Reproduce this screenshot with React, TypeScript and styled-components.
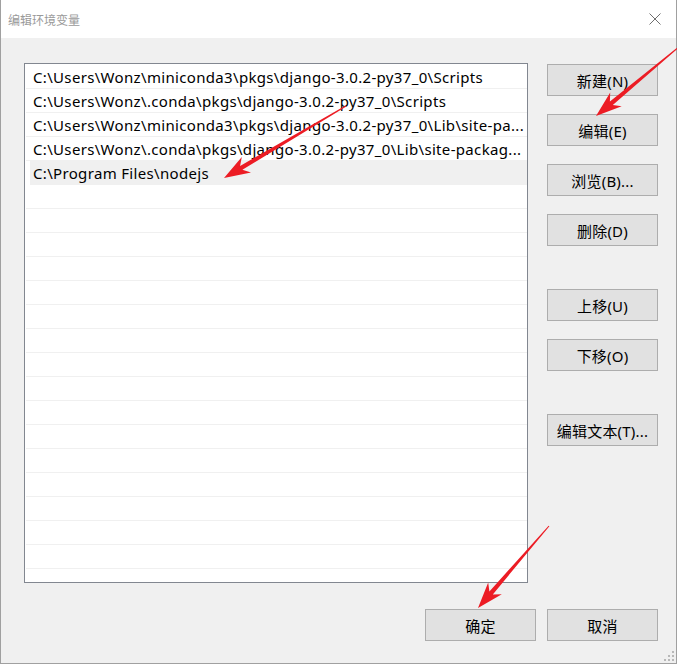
import React from "react";
import styled, { createGlobalStyle } from "styled-components";

const GlobalStyle = createGlobalStyle`
  html, body { margin: 0; padding: 0; background: #f0f0f0; }
  body { font-family: "Noto Sans CJK SC", "Noto Sans", sans-serif; }
  * { box-sizing: border-box; }
`;

const Page = styled.div`
  position: relative;
  width: 677px;
  height: 664px;
  overflow: hidden;
`;

const Window = styled.div`
  width: 677px;
  height: 664px;
  border: 1px solid #a0a0a0;
  border-top: none;
  background: #f0f0f0;
  display: flex;
  flex-direction: column;
`;

const TitleBar = styled.div`
  height: 38px;
  flex: none;
  background: #ffffff;
  display: flex;
  align-items: center;
  justify-content: space-between;
  padding: 0 15px 0 7px;
`;

const Title = styled.span`
  font-size: 12px;
  line-height: 1;
  color: #9a9a9a;
  padding-top: 1px;
`;

const CloseIcon = styled.svg`
  width: 12px;
  height: 12px;
  display: block;
`;

const Body = styled.div`
  flex: 1;
  display: grid;
  grid-template-columns: 504px 111px;
  grid-template-rows: 520px 32px;
  column-gap: 19px;
  row-gap: 26px;
  padding: 25px 0 0 23px;
  position: relative;
`;

const ListBox = styled.div`
  border: 1px solid #828790;
  background: #ffffff;
  overflow: hidden;
  padding: 1px 0 0 1px;
`;

const Row = styled.div<{ $selected?: boolean }>`
  height: 24px;
  border-bottom: 1px solid #f0f0f0;
  display: flex;
  align-items: center;
  margin-left: ${(p) => (p.$selected ? "4px" : "0")};
  padding-left: ${(p) => (p.$selected ? "3px" : "7px")};
  padding-top: 1px;
  background: ${(p) => (p.$selected ? "#f0f0f0" : "#ffffff")};
  font-family: "Noto Sans", "Noto Sans CJK SC", sans-serif;
  font-size: 15px;
  letter-spacing: 0.33px;
  color: #000;
  white-space: nowrap;
  overflow: hidden;
`;

const SideButtons = styled.div`
  display: flex;
  flex-direction: column;
`;

const Gap = styled.div<{ $h: number }>`
  height: ${(p) => p.$h}px;
  flex: none;
`;

const Button = styled.div`
  width: 111px;
  height: 32px;
  flex: none;
  border: 1px solid #adadad;
  background: #e1e1e1;
  display: flex;
  align-items: center;
  justify-content: center;
  font-family: "Noto Sans", "Noto Sans CJK SC", sans-serif;
  font-size: 15px;
  letter-spacing: 0.2px;
  color: #000;
  white-space: nowrap;
`;

const Footer = styled.div`
  grid-column: 1 / span 2;
  display: flex;
  justify-content: flex-end;
  gap: 11px;
`;

const Grip = styled.svg`
  position: absolute;
  right: 1px;
  bottom: 1px;
  width: 12px;
  height: 12px;
`;

const Overlay = styled.svg`
  position: absolute;
  left: 0;
  top: 0;
  width: 677px;
  height: 664px;
  pointer-events: none;
`;

const rows = [
  "C:\\Users\\Wonz\\miniconda3\\pkgs\\django-3.0.2-py37_0\\Scripts",
  "C:\\Users\\Wonz\\.conda\\pkgs\\django-3.0.2-py37_0\\Scripts",
  "C:\\Users\\Wonz\\miniconda3\\pkgs\\django-3.0.2-py37_0\\Lib\\site-pa...",
  "C:\\Users\\Wonz\\.conda\\pkgs\\django-3.0.2-py37_0\\Lib\\site-packag...",
  "C:\\Program Files\\nodejs",
];

function arrowPoints(x1: number, y1: number, x2: number, y2: number) {
  const dx = x2 - x1;
  const dy = y2 - y1;
  const L = Math.hypot(dx, dy);
  const ux = dx / L;
  const uy = dy / L;
  const nx = -uy;
  const ny = ux;
  const H = 26;
  const W = 9;
  const notch = 6;
  const w0 = 1;
  const w1 = 4.5;
  const bx = x2 - ux * (H - notch);
  const by = y2 - uy * (H - notch);
  const hx = x2 - ux * H;
  const hy = y2 - uy * H;
  const pts = [
    [x1 + (nx * w0) / 2, y1 + (ny * w0) / 2],
    [bx + (nx * w1) / 2, by + (ny * w1) / 2],
    [hx + nx * W, hy + ny * W],
    [x2, y2],
    [hx - nx * W, hy - ny * W],
    [bx - (nx * w1) / 2, by - (ny * w1) / 2],
    [x1 - (nx * w0) / 2, y1 - (ny * w0) / 2],
  ];
  return pts.map((p) => `${p[0].toFixed(1)},${p[1].toFixed(1)}`).join(" ");
}

const arrows = [
  { x1: 680, y1: 46, x2: 596, y2: 116 },
  { x1: 346, y1: 106, x2: 224, y2: 178 },
  { x1: 549, y1: 526, x2: 478, y2: 608 },
];

export default function App() {
  const empties = Array.from({ length: 18 });
  return (
    <Page>
      <GlobalStyle />
      <Window>
        <TitleBar>
          <Title>编辑环境变量</Title>
          <CloseIcon viewBox="0 0 12 12">
            <path d="M0.5 0.5 L11.5 11.5 M11.5 0.5 L0.5 11.5" stroke="#6f6f6f" strokeWidth="1" fill="none" />
          </CloseIcon>
        </TitleBar>
        <Body>
          <ListBox>
            {rows.map((r, i) => (
              <Row key={i} $selected={i === 4}>
                {r}
              </Row>
            ))}
            {empties.map((_, i) => (
              <Row key={"e" + i} />
            ))}
          </ListBox>
          <SideButtons>
            <Gap $h={1} />
            <Button>新建(N)</Button>
            <Gap $h={18} />
            <Button>编辑(E)</Button>
            <Gap $h={18} />
            <Button>浏览(B)...</Button>
            <Gap $h={18} />
            <Button>删除(D)</Button>
            <Gap $h={43} />
            <Button>上移(U)</Button>
            <Gap $h={18} />
            <Button>下移(O)</Button>
            <Gap $h={43} />
            <Button>编辑文本(T)...</Button>
          </SideButtons>
          <Footer>
            <Button>确定</Button>
            <Button>取消</Button>
          </Footer>
          <Grip viewBox="0 0 12 12">
            {[
              [9, 1],
              [9, 5],
              [5, 5],
              [9, 9],
              [5, 9],
              [1, 9],
            ].map(([x, y], i) => (
              <rect key={i} x={x} y={y} width="2" height="2" fill="#b8b8b8" />
            ))}
          </Grip>
        </Body>
      </Window>
      <Overlay viewBox="0 0 677 664">
        {arrows.map((a, i) => (
          <polygon key={i} points={arrowPoints(a.x1, a.y1, a.x2, a.y2)} fill="#ec1c24" />
        ))}
      </Overlay>
    </Page>
  );
}
